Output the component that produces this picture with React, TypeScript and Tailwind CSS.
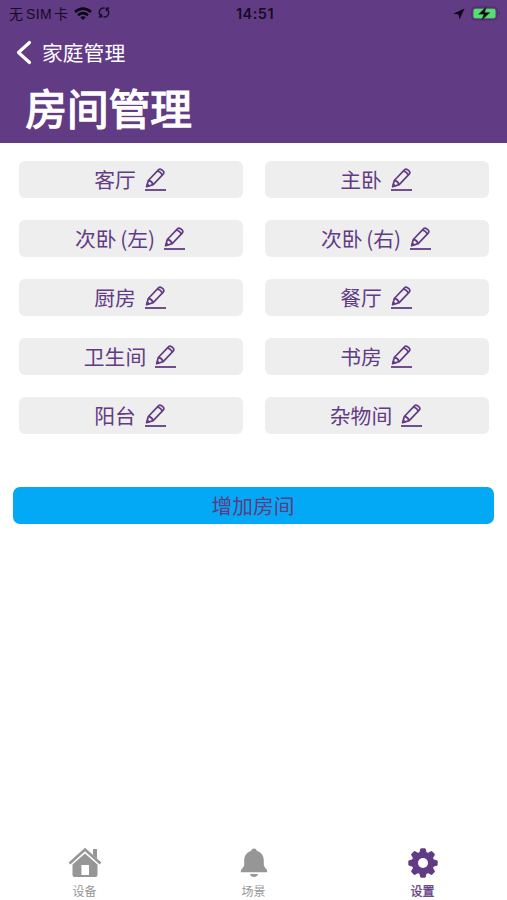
import React from "react";

const rooms = ["客厅", "主卧", "次卧 (左)", "次卧 (右)", "厨房", "餐厅", "卫生间", "书房", "阳台", "杂物间"];

function Pencil() {
  return (
    <svg width="21" height="24" viewBox="0 0 21 24" fill="none" stroke="currentColor" strokeWidth="1.7" strokeLinejoin="round" className="shrink-0">
      <path d="M1.6 18.7L3.3 12.5L13.2 2.1Q14.8 .6 16.5 1.7L18.3 3.2Q19.5 4.6 18.2 6.2L8.2 16.6Z" />
      <path d="M12.4 2.9Q15.8 3.9 17.4 7M3.4 12.4Q6.8 13 8.1 16.5" />
      <path d="M1.6 18.7L2.4 15.6L4.7 17.8Z" fill="currentColor" strokeWidth="0.8" />
      <path d="M0 22H21" strokeWidth="1.8" />
    </svg>
  );
}

function StatusBar() {
  return (
    <div className="grid h-[28px] grid-cols-[1fr_auto_1fr] items-center pr-[6px] pl-[9px] text-[14px] leading-none text-[#160b22]">
      <div className="flex items-center">
        <span className="pb-[2px]">无</span>
        <span className="ml-[3px] font-['Liberation_Sans'] tracking-[0.4px]">SIM</span>
        <span className="ml-[2px] pb-[2px]">卡</span>
        <svg width="18" height="14" viewBox="0 0 18 14" className="mb-[1px] ml-[6px]" fill="none" stroke="#0b0511" strokeWidth="2.6">
          <path d="M1 5Q9-1.8 17 5M4 8.2Q9 4 14 8.2" />
          <path d="M6.3 10.2Q9 8.1 11.7 10.2L9 13Z" fill="#0b0511" stroke="none" />
        </svg>
        <svg width="12" height="13" viewBox="0 0 12 13" className="mb-[3px] ml-[6px]" fill="none" stroke="currentColor" strokeWidth="1.3">
          <path d="M3.6 10.4A4.6 4.6 0 0 1 4.2 2.1L6.5 2M8.4 2.6A4.6 4.6 0 0 1 7.8 10.9L5.5 11" />
          <path d="M.8 11L3.8 10.6L3.5 7.8M11.2 2L8.2 2.4L8.5 5.2" />
        </svg>
      </div>
      <span className="font-[Inter] text-[14.5px] font-semibold tracking-[0.5px]">14:51</span>
      <div className="flex items-center justify-end">
        <svg width="12" height="12" viewBox="0 0 11 11" fill="#0b0511"><path d="M10.5 .5L6 10.5L5.1 5.9L.4 5.2Z" /></svg>
        <svg width="30" height="15" viewBox="0 0 30 15" className="mb-[1px] ml-[6px]">
          <rect x=".7" y="1" width="25.5" height="13" rx="3.5" fill="none" stroke="#4b2b69" />
          <rect x="2.5" y="2.7" width="22" height="9.6" rx="2" fill="#55df70" />
          <path d="M28 5.3Q29.7 7.5 28 9.7Z" fill="#36204b" />
          <path d="M15.5 .5L7.5 8.2H12.8L10.5 14.5L19 6.5H13.7Z" fill="#090c0c" stroke="#284b35" strokeWidth=".4" />
        </svg>
      </div>
    </div>
  );
}

function HomeIcon() {
  return (
    <svg width="34" height="34" viewBox="0 0 34 34" fill="#969696">
      <path d="M25 3H29V13L25 9Z" />
      <path d="M1.5 17.5L17 3.5L32.5 17.5" fill="none" stroke="#969696" strokeWidth="2.6" />
      <path fillRule="evenodd" d="M4.5 18.5L17 7.5L29.5 18.5V29Q29.5 31 27.5 31H6.5Q4.5 31 4.5 29ZM13.4 19V29H21V19Z" />
    </svg>
  );
}

function BellIcon() {
  return (
    <svg width="34" height="34" viewBox="0 0 34 34" fill="#969696">
      <path d="M17 2.5C18.7 2.5 19.7 3.5 19.7 4.8C24.4 6.3 26.8 9.9 26.8 14.5V18.5C26.8 21.5 30.2 23 30.2 25V26.3H3.8V25C3.8 23 7.2 21.5 7.2 18.5V14.5C7.2 9.9 9.6 6.3 14.3 4.8C14.3 3.5 15.3 2.5 17 2.5Z" />
      <path d="M13 28H21Q20.2 31 17 31T13 28Z" />
    </svg>
  );
}

function GearIcon() {
  return (
    <svg width="34" height="34" viewBox="-17 -17 34 34" fill="#623b85">
      <g>
        {[0, 45, 90, 135].map((angle) => (
          <path key={angle} transform={`rotate(${angle})`} d="M-3.7-10L-2.8-13.8Q-2.5-14.7-1.5-14.7H1.5Q2.5-14.7 2.8-13.8L3.7-10V10L2.8 13.8Q2.5 14.7 1.5 14.7H-1.5Q-2.5 14.7-2.8 13.8L-3.7 10Z" />
        ))}
        <circle r="11.2" />
        <circle r="5" fill="white" />
      </g>
    </svg>
  );
}

const tabs = [
  { label: "设备", Icon: HomeIcon, active: false },
  { label: "场景", Icon: BellIcon, active: false },
  { label: "设置", Icon: GearIcon, active: true },
];

export default function App() {
  return (
    <div className="flex h-[900px] w-full flex-col bg-white font-['Noto_Sans_CJK_SC',sans-serif] text-[#623b85]">
      <header className="h-[142.5px] shrink-0 bg-[#623b85] text-white">
        <StatusBar />
        <div className="flex h-[48px] items-center pl-[16px]">
          <svg width="16" height="25" viewBox="0 0 16 25" fill="none" stroke="white" strokeWidth="3.2" strokeLinecap="round" strokeLinejoin="round">
            <path d="M13.5 2.5L2.5 12.5L13.5 22.5" />
          </svg>
          <span className="ml-[10px] pb-[1px] text-[20.8px] leading-[30px]">家庭管理</span>
        </div>
        <h1 className="pl-[25.5px] text-[41.6px] leading-[62px] font-normal [-webkit-text-stroke:1.4px_white]">房间管理</h1>
      </header>
      <main className="flex-1">
        <div className="mt-[18.5px] grid grid-cols-2 gap-x-[22px] gap-y-[22px] pr-[18px] pl-[19px]">
          {rooms.map((room) => (
            <button key={room} className="flex h-[37px] items-center justify-center gap-[9px] rounded-[6px] bg-[#eeeeee] pr-[2px] text-[20.8px] leading-[30px]">
              <span className="pb-[2px] [word-spacing:-1px]">{room}</span>
              <Pencil />
            </button>
          ))}
        </div>
        <div className="mt-[53px] px-[13px]">
          <button className="h-[37px] w-full rounded-[7px] bg-[#03a9f4] pr-px pb-px text-[20.8px] leading-[30px]">增加房间</button>
        </div>
      </main>
      <nav className="grid h-[54px] shrink-0 grid-cols-3">
        {tabs.map(({ label, Icon, active }) => (
          <div key={label} className={active ? "flex flex-col items-center text-[#623b85] [-webkit-text-stroke:0.3px_#623b85]" : "flex flex-col items-center text-[#969696]"}>
            <Icon />
            <span className="mt-[2px] text-[12px] leading-[18px]">{label}</span>
          </div>
        ))}
      </nav>
    </div>
  );
}
